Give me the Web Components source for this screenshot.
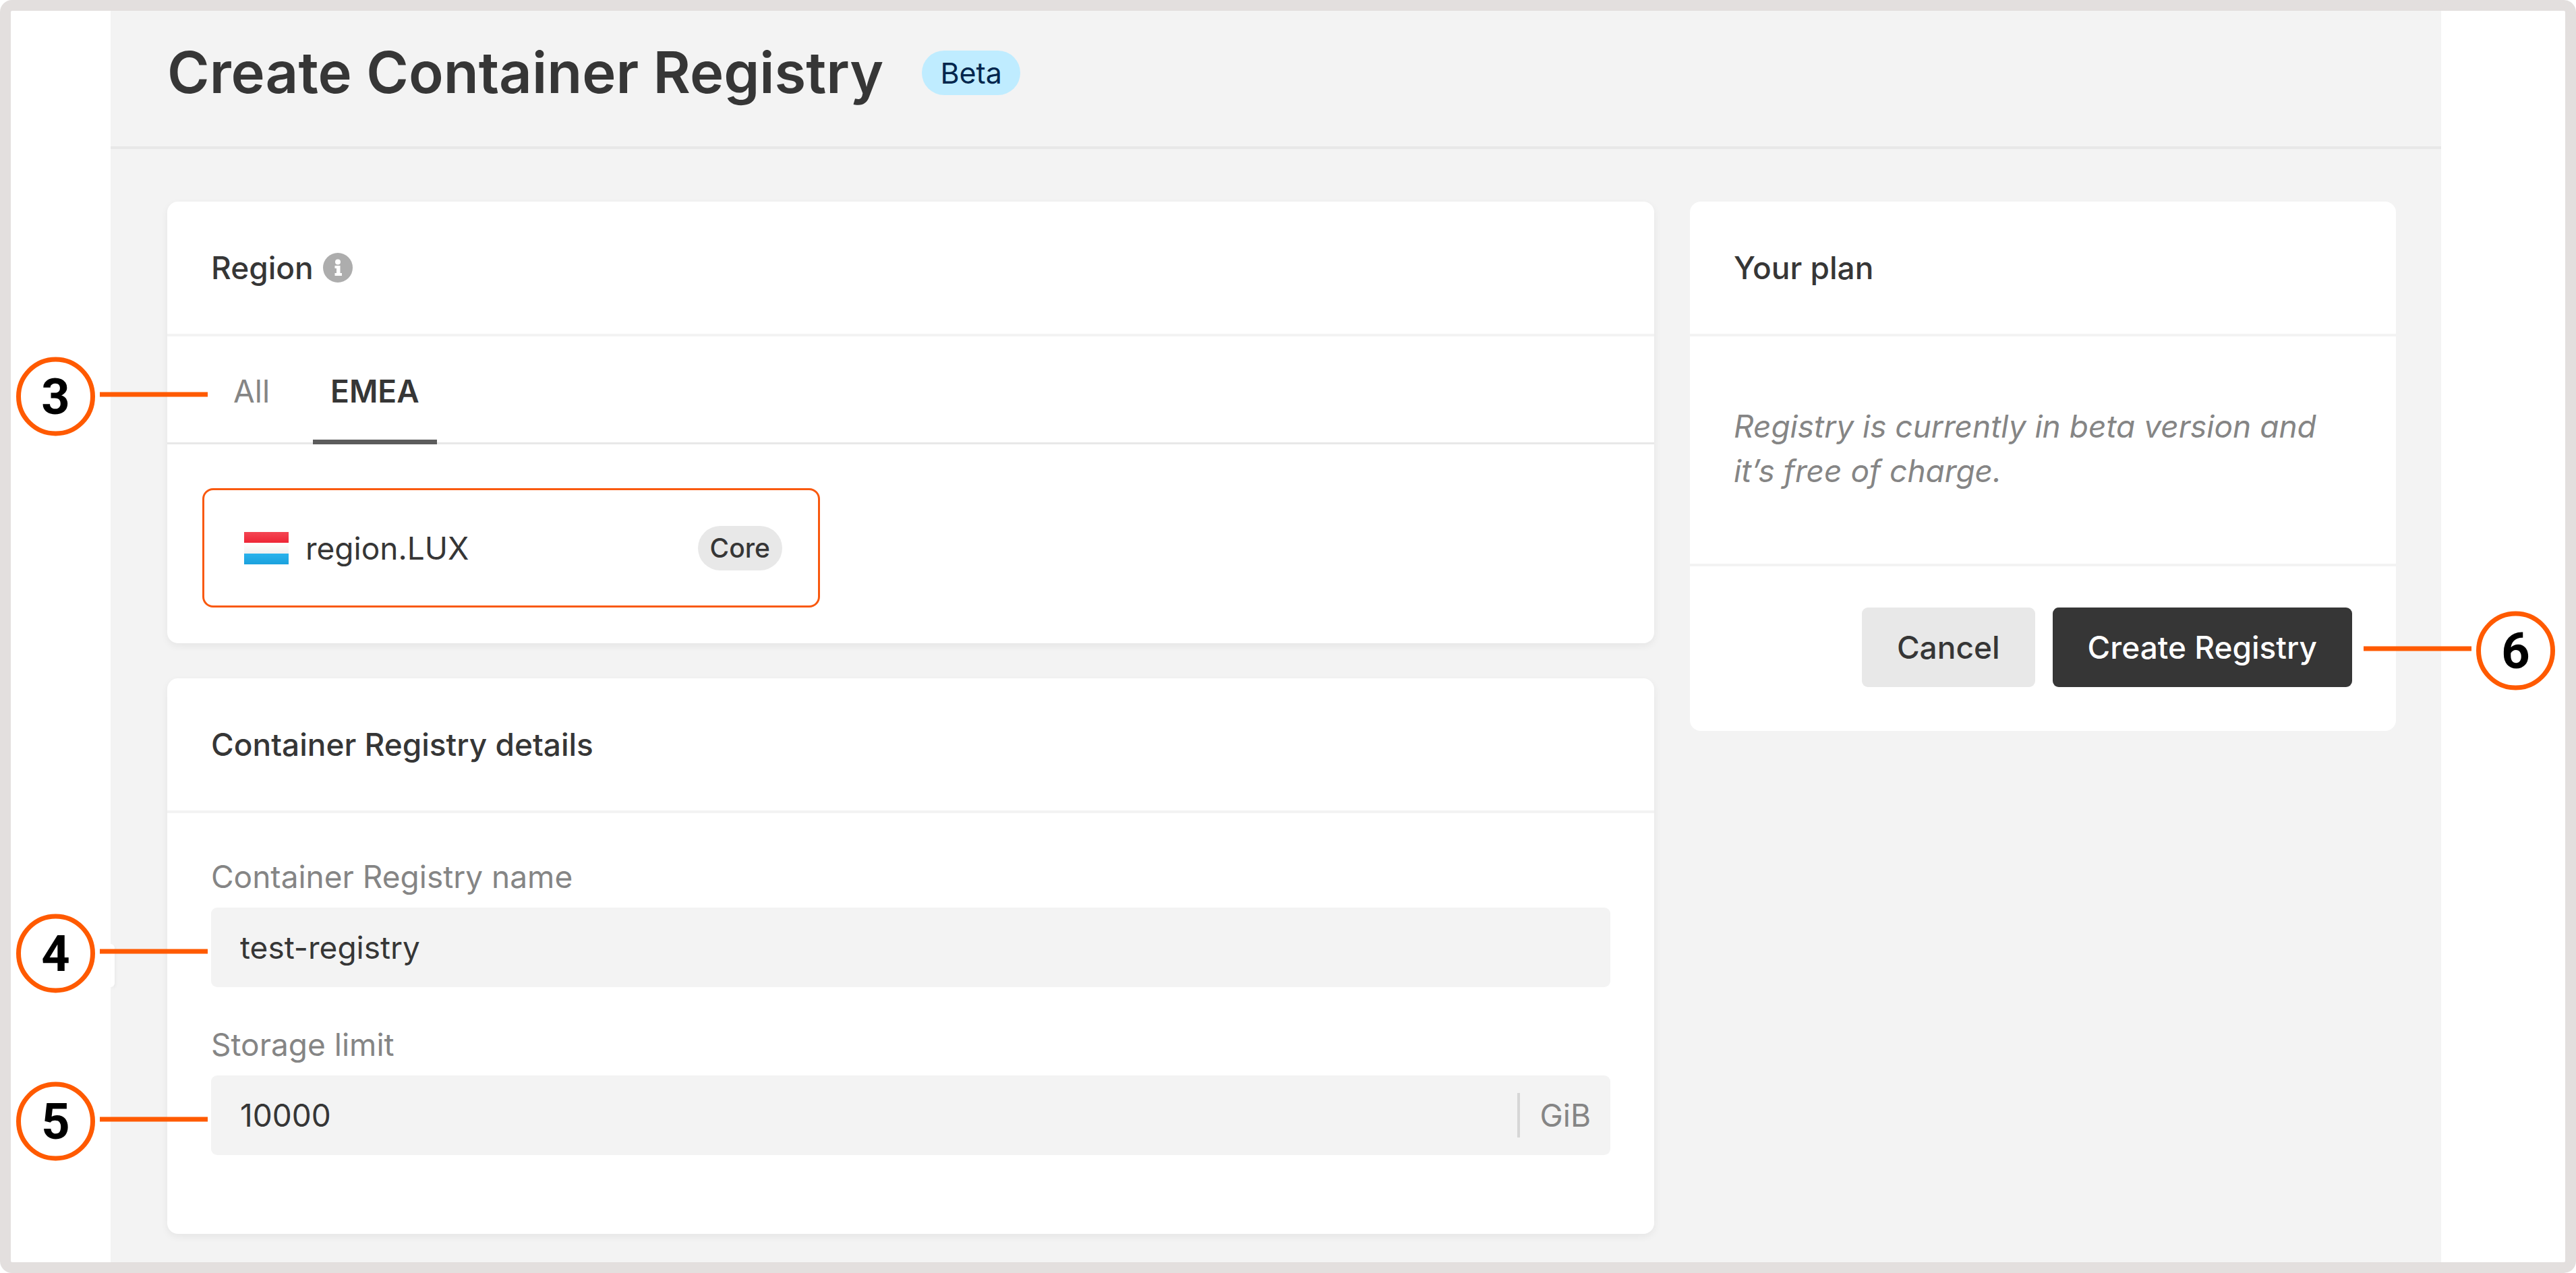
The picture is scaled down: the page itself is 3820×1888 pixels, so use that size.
<!DOCTYPE html>
<html lang="en">
<head>
<meta charset="utf-8">
<title>Create Container Registry</title>
<style>
  html { background: #fff; }
  body {
    margin: 0;
    font-family: Inter, "Liberation Sans", sans-serif;
    font-size: 46px;
    line-height: 66px;
    color: #363636;
  }
</style>
</head>
<body>
<registry-page></registry-page>

<script>
const define = (name, html, setup) => {
  const template = document.createElement('template');
  template.innerHTML = html;
  customElements.define(name, class extends HTMLElement {
    constructor() {
      super();
      this.attachShadow({ mode: 'open' }).append(template.content.cloneNode(true));
    }
    connectedCallback() {
      if (setup) setup(this, this.shadowRoot);
    }
  });
};

/* Rounded label */
define('tag-pill', `
  <style>
    :host {
      display: inline-block; box-sizing: border-box; padding: 0 18px;
      border-radius: 33px; background: #e8e8e8; color: #363636;
      font-size: 39px; font-weight: 500; line-height: 66px;
    }
    :host([tone="info"]) { padding: 0 27px; background: #bfecff; color: #00264d; font-size: 43px; font-weight: 400; }
  </style>
  <slot></slot>`);

/* Numbered marker joined by a line to the element it sits in */
define('step-callout', `
  <style>
    :host {
      position: absolute; right: calc(100% + 5px); top: calc(50% + 9px); translate: 0 -50%;
      display: flex; align-items: center; gap: 7px;
    }
    :host([side="right"]) { flex-direction: row-reverse; right: auto; left: calc(100% + 17px); top: calc(50% + 5px); }
    .ring {
      box-sizing: border-box; width: 117px; height: 117px; border: 7px solid #ff5a00; border-radius: 50%;
      background: #fff; color: #000; display: flex; align-items: center; justify-content: center;
      font: 700 74px/80px Roboto, sans-serif;
    }
    .line { width: 160px; height: 7px; margin-bottom: 7px; background: #ff5a00; }
  </style>
  <span class="ring"><slot></slot></span><span class="line"></span>`);

define('page-header', `
  <style>
    :host { display: flex; align-items: center; gap: 57px; padding: 40px 84px 57px; border-bottom: 4px solid #e8e8e8; }
    h1 { margin: 0; font-size: 85px; font-weight: 600; line-height: 104px; }
  </style>
  <h1><slot></slot></h1><slot name="tag"></slot>`);

define('info-icon', `
  <style>:host { display: block; width: 44px; height: 44px; } svg { display: block; }</style>
  <svg width="44" height="44" viewBox="0 0 44 44" aria-hidden="true">
    <circle cx="22" cy="22" r="22" fill="#adadad"/>
    <circle cx="22" cy="13.500" r="4" fill="#fff"/>
    <path d="M17.500 19h8v11h2.500v4H17.500v-4h2.500v-7h-2.500z" fill="#fff"/>
  </svg>`);

define('lux-flag', `
  <style>:host { display: block; } svg { display: block; }</style>
  <svg width="66" height="48" viewBox="0 0 66 48" aria-hidden="true">
    <defs>
      <linearGradient id="r" x2="0" y2="1"><stop stop-color="#f44653"/><stop offset="1" stop-color="#ee2536"/></linearGradient>
      <linearGradient id="w" x2="0" y2="1"><stop stop-color="#fff"/><stop offset="1" stop-color="#f0f0f0"/></linearGradient>
      <linearGradient id="b" x2="0" y2="1"><stop stop-color="#29b2ec"/><stop offset="1" stop-color="#1ba1dd"/></linearGradient>
    </defs>
    <rect width="66" height="16" fill="url(#r)"/>
    <rect y="16" width="66" height="16" fill="url(#w)"/>
    <rect y="32" width="66" height="16" fill="url(#b)"/>
  </svg>`);

define('panel-card', `
  <style>
    :host { display: block; background: #fff; border-radius: 16px; box-shadow: 0 4px 12px rgba(0, 0, 0, .06); }
    :host([flat]) { box-shadow: none; }
    header { display: flex; align-items: center; gap: 14px; padding: 65px; border-bottom: 4px solid #f3f3f3; }
    h2 { margin: 0; font-size: 46px; font-weight: 500; line-height: 66px; }
  </style>
  <header><h2></h2><slot name="icon"></slot></header>
  <slot></slot>`,
  (host, root) => { root.querySelector('h2').textContent = host.getAttribute('heading'); });

define('region-tabs', `
  <style>
    :host { display: block; padding: 0 65px; box-shadow: inset 0 -3px #e8e8e8; }
    .list { position: relative; display: flex; gap: 38px; padding-left: 7px; }
    button {
      padding: 48px 26px 39px; border: 0; border-bottom: 7px solid transparent;
      background: none; color: #858585; font: inherit;
    }
    button[aria-selected="true"] { border-color: #5c5c5c; color: #363636; font-weight: 600; }
  </style>
  <div class="list" role="tablist">
    <button role="tab" aria-selected="false">All</button>
    <button role="tab" aria-selected="true">EMEA</button>
    <step-callout>3</step-callout>
  </div>`);

define('region-option', `
  <style>
    :host { display: block; padding: 65px 52px 53px; }
    button {
      display: flex; align-items: center; gap: 25px; box-sizing: border-box;
      width: 916px; max-width: 100%; padding: 53px 53px 52px 59px;
      border: 3px solid #f9590f; border-radius: 16px; background: #fff;
      color: inherit; font: inherit; text-align: left;
    }
    .name { flex: 1; }
  </style>
  <button aria-pressed="true">
    <lux-flag></lux-flag><span class="name"><slot></slot></span><tag-pill>Core</tag-pill>
  </button>`);

define('text-field', `
  <style>
    :host { display: flex; flex-direction: column; gap: 13px; }
    label { color: #858585; }
    .box { position: relative; display: flex; align-items: center; border-radius: 9px; background: #f3f3f3; }
    input {
      flex: 1; min-width: 0; box-sizing: border-box; padding: 26px 43px; border: 0; outline: 0; background: none;
      height: 118px; color: inherit; font: inherit;
    }
    .unit { padding: 0 29px; border-left: 4px solid #d6d6d6; color: #858585; }
    .unit:empty { display: none; }
  </style>
  <label for="field"></label>
  <div class="box"><input id="field" type="text"><span class="unit"></span><slot></slot></div>`,
  (host, root) => {
    root.querySelector('label').textContent = host.getAttribute('label');
    root.querySelector('input').value = host.getAttribute('value');
    root.querySelector('.unit').textContent = host.getAttribute('unit') || '';
  });

define('action-button', `
  <style>
    :host { display: block; position: relative; }
    button {
      display: block; padding: 26px 52px; border: 0; border-radius: 9px; background: #e8e8e8;
      color: #363636; font: inherit; font-weight: 500; white-space: nowrap;
    }
    :host([primary]) button { background: #363636; color: #fff; }
  </style>
  <button type="button"><slot></slot></button><slot name="callout"></slot>`);

define('plan-summary', `
  <style>
    :host { display: block; }
    p { margin: 0; padding: 100px 65px 105px; border-bottom: 4px solid #f3f3f3; color: #858585; font-style: italic; }
    footer { display: flex; justify-content: flex-end; gap: 26px; padding: 61px 65px 65px; }
  </style>
  <p>Registry is currently in beta version and it’s free of charge.</p>
  <footer>
    <action-button>Cancel</action-button>
    <action-button primary>Create Registry<step-callout slot="callout" side="right">6</step-callout></action-button>
  </footer>`);

define('registry-page', `
  <style>
    :host {
      display: flex; box-sizing: border-box; min-height: 100vh; padding: 0 184px 0 148px;
      border: 16px solid #e3dfde; border-radius: 18px; background: #fff;
    }
    main { position: relative; flex: 1; min-width: 0; background: #f3f3f3; }
    .nub {
      position: absolute; left: 0; bottom: 408px; width: 6px; height: 64px;
      border-radius: 0 6px 6px 0; background: #fff; box-shadow: 2px 2px 4px rgba(0, 0, 0, .04);
    }
    .columns { display: flex; align-items: flex-start; gap: 53px; padding: 78px 67px 42px 84px; }
    .left { flex: 2205 1 0; min-width: 0; display: flex; flex-direction: column; gap: 52px; }
    .right { flex: 1047 1 0; min-width: 0; }
    form { display: flex; flex-direction: column; gap: 52px; padding: 61px 65px 117px; }
  </style>
  <main>
    <span class="nub" aria-hidden="true"></span>
    <page-header>Create Container Registry<tag-pill slot="tag" tone="info">Beta</tag-pill></page-header>
    <div class="columns">
      <div class="left">
        <panel-card heading="Region">
          <info-icon slot="icon"></info-icon>
          <region-tabs></region-tabs>
          <region-option>region.LUX</region-option>
        </panel-card>
        <panel-card heading="Container Registry details">
          <form>
            <text-field label="Container Registry name" value="test-registry"><step-callout>4</step-callout></text-field>
            <text-field label="Storage limit" value="10000" unit="GiB"><step-callout>5</step-callout></text-field>
          </form>
        </panel-card>
      </div>
      <panel-card class="right" flat heading="Your plan"><plan-summary></plan-summary></panel-card>
    </div>
  </main>`);
</script>
</body>
</html>
